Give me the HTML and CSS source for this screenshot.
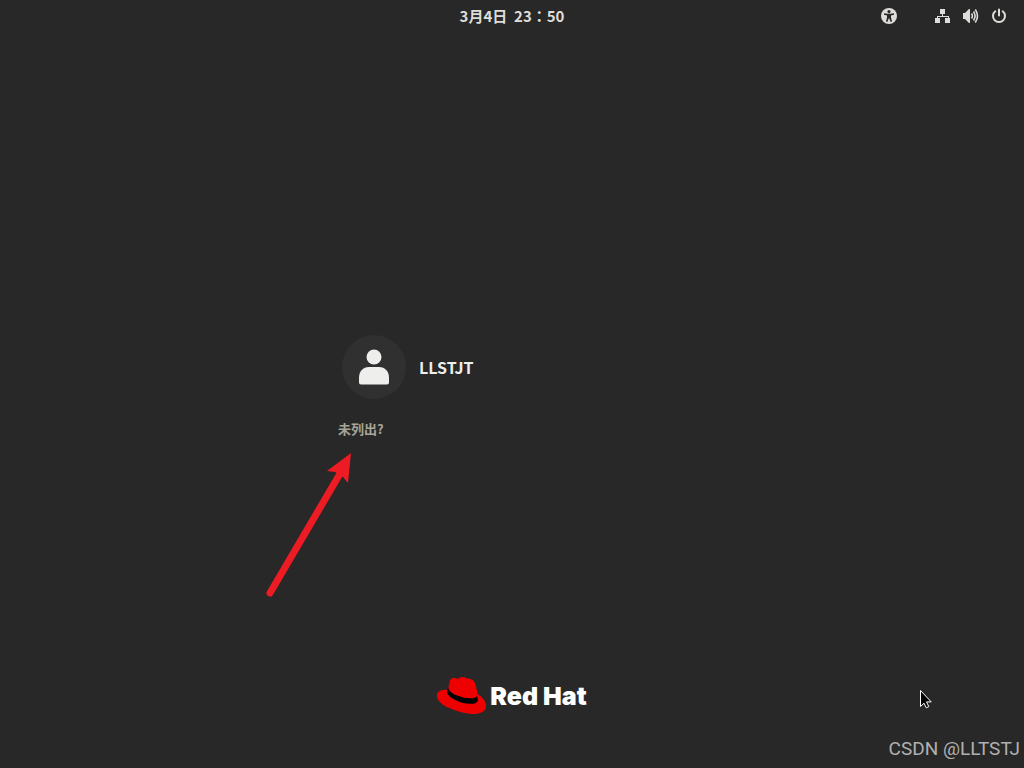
FILE: index.html
```html
<!DOCTYPE html>
<html lang="zh-CN">
<head>
  <meta charset="utf-8">
  <title>Login</title>
  <link rel="stylesheet" href="styles.css">
</head>
<body>
  <header class="topbar">
    <time class="clock">3月4日&nbsp; 23<span class="colon" lang="zh-TW">：</span>50</time>
    <nav class="status">
      <button class="icon-btn a11y" aria-label="辅助功能">
        <svg width="16" height="16" viewBox="0 0 16 16">
          <circle cx="8" cy="8" r="8" fill="#deddda"/>
          <circle cx="8" cy="3.6" r="1.6" fill="#282828"/>
          <path d="M3 5.2l3.400.6h3.200L13 5.200v1.500l-3 .8v2l1 4-1.400.4L8.300 10.500h-.6l-1.300 3.400L5 13.500l1-4v-2l-3-.8z" fill="#282828"/>
        </svg>
      </button>
      <button class="icon-btn" aria-label="网络">
        <svg width="16" height="16" viewBox="0 0 16 16" fill="#deddda">
          <path d="M5 1h5v5H8v2h6v2h1v5h-5v-5h3V9H3v1h2v5H0v-5h2V8h5V6H5z"/>
        </svg>
      </button>
      <button class="icon-btn" aria-label="音量">
        <svg width="16" height="16" viewBox="0 0 16 16">
          <path d="M0 5h2l4-4h1v14H6l-4-4H0z" fill="#deddda"/>
          <path d="M8.500 5.500q1.800 2.500 0 5M10.500 3.500q3.200 4.500 0 9M12.300 1.500q4.400 6.500 0 13" fill="none" stroke="#deddda" stroke-width="1.600"/>
        </svg>
      </button>
      <button class="icon-btn" aria-label="关机">
        <svg width="16" height="16" viewBox="0 0 16 16" fill="none" stroke="#deddda" stroke-width="2" stroke-linecap="round">
          <path d="M8 1.500v6M4.300 3.300a6 6 0 1 0 7.400 0"/>
        </svg>
      </button>
    </nav>
  </header>

  <main class="login">
    <div class="users">
      <button class="user">
        <span class="avatar">
          <svg width="32" height="36" viewBox="0 0 32 36" fill="#eeeeec">
            <circle cx="16" cy="8" r="7.500"/>
            <path d="M1 29c0-7 4-11 10-11h10c6 0 10 4 10 11v4.500q0 2-2 2H3q-2 0-2-2z"/>
          </svg>
        </span>
        <span class="name">LLSTJT</span>
      </button>
      <button class="not-listed">未列出?</button>
    </div>
  </main>

  <footer class="brand">
    <svg width="49" height="37" viewBox="21 21 147 111" aria-hidden="true">
      <path d="M54 59L60 31Q63 24 71 23Q76 23 83 27Q90 21 97 21Q106 22 112 26Q120 24 128 30Q134 34 136 42L143 72Q161 83 167 99Q171 116 159 125Q147 132 126 132Q93 130 60 115Q35 105 24 89Q19 78 22 70Q27 60 45 59Z" fill="#ee0000"/>
      <path d="M54 53Q58 68 83 77Q111 87 132 84Q139 83 141 78L144 89Q143 98 130 101Q104 104 76 90Q53 80 51 66Z" fill="#000"/>
    </svg>
    <span class="brand-name">Red Hat</span>
  </footer>

  <svg class="arrow" width="90" height="150" viewBox="0 0 90 150" fill="#ed1c24">
    <path d="M8 143L79 22" stroke="#ed1c24" stroke-width="7" stroke-linecap="round"/>
    <path d="M89 3L65 21l8 1 8 5 5 6z"/>
  </svg>
  <svg class="pointer" width="13" height="20" viewBox="0 0 13 20">
    <path d="M1.500 1.500v16l3.500-3.300 2.300 4.600 2.500-1.200-2.300-4.700h4.700z" fill="#000" stroke="#fff"/>
  </svg>
  <span class="watermark">CSDN @LLTSTJ</span>
</body>
</html>
```
FILE: styles.css
```css
body {
  margin: 0;
  min-height: 100vh;
  display: flex;
  flex-direction: column;
  position: relative;
  background-color: #282828;
  color: #deddda;
  font-family: "Noto Sans CJK SC", sans-serif;
}
button {
  padding: 0;
  border: 0;
  background: none;
  color: inherit;
  font: inherit;
  cursor: pointer;
}
svg {
  display: block;
}
.topbar {
  display: grid;
  grid-template-columns: 1fr auto 1fr;
  align-items: center;
  height: 32px;
}
.clock {
  grid-column: 2;
  font-size: 15px;
  line-height: 20px;
  font-weight: bold;
}
.colon {
  font-family: "Noto Sans CJK TC", sans-serif;
}
.status {
  display: flex;
  justify-content: flex-end;
  gap: 12px;
  padding-right: 17px;
}
.a11y {
  margin-right: 26px;
}
.login {
  flex: 1;
  display: flex;
  align-items: center;
  justify-content: center;
}
.users {
  display: flex;
  flex-direction: column;
  align-items: flex-start;
  gap: 20px;
  width: 348px;
  padding-top: 64px;
}
.user {
  display: flex;
  align-items: center;
  gap: 13px;
  padding-left: 4px;
}
.avatar {
  display: flex;
  align-items: center;
  justify-content: center;
  width: 64px;
  height: 64px;
  border-radius: 50%;
  background-color: #303030;
}
.name {
  color: #eeeeec;
  font-size: 16px;
  line-height: 24px;
  font-weight: bold;
}
.not-listed {
  color: #a5a598;
  font-size: 13px;
  line-height: 20px;
  font-weight: bold;
}
.brand {
  display: flex;
  align-items: center;
  justify-content: center;
  gap: 4px;
  padding-bottom: 54px;
}
.brand-name {
  color: #fff;
  font-family: Inter, sans-serif;
  font-size: 25px;
  line-height: 36px;
  font-weight: 900;
}
.arrow {
  position: absolute;
  left: 262px;
  top: 450px;
}
.pointer {
  position: absolute;
  left: 919px;
  top: 689px;
}
.watermark {
  position: absolute;
  right: 4px;
  bottom: 8px;
  color: #b0b0b0;
  font-family: Roboto, sans-serif;
  font-size: 19px;
  line-height: 22px;
}
```
